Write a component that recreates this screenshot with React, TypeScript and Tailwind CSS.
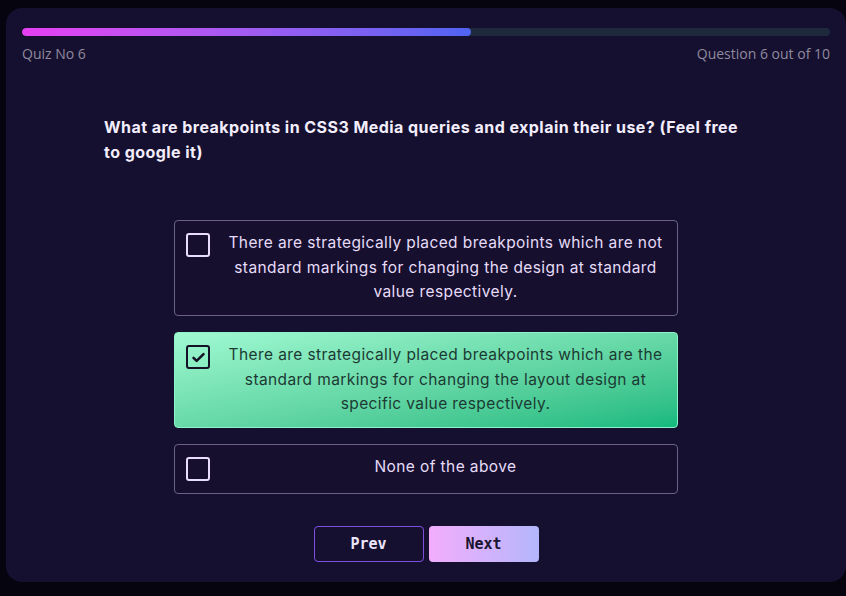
import React, { useState } from "react";

const options = [
  "There are strategically placed breakpoints which are not standard markings for changing the design at standard value respectively.",
  "There are strategically placed breakpoints which are the standard markings for changing the layout design at specific value respectively.",
  "None of the above",
];

function Check({ checked }: { checked: boolean }) {
  return (
    <div
      className={
        "w-6 h-6 shrink-0 mt-[2px] mb-[1.5px] rounded-[3px] flex items-center justify-center " +
        (checked ? "border-[2.5px] border-[#141026]" : "border-2 border-[#e8ddfb]")
      }
    >
      {checked && (
        <svg width="15" height="15" viewBox="0 0 24 24" fill="none">
          <path d="M4 12.5l5 5L20 6.5" stroke="#141026" strokeWidth="4" strokeLinecap="round" strokeLinejoin="round" />
        </svg>
      )}
    </div>
  );
}

export default function App() {
  const [sel, setSel] = useState(1);
  return (
    <div className="w-[846px] h-[596px] bg-[#05040f] pt-2 pl-[6px] overflow-hidden" style={{ fontFamily: "Inter, 'Noto Sans', sans-serif" }}>
      <div className="w-[840px] h-[574px] bg-[#161030] rounded-2xl px-4 pt-5 flex flex-col">
        <div className="h-2 w-full rounded-full bg-[#1e293b] overflow-hidden">
          <div className="h-full w-[449px] rounded-full bg-gradient-to-r from-[#e63ef2] to-[#4f63f2]" />
        </div>
        <div className="flex justify-between mt-[7.5px] text-[14px] leading-5 text-[#8f8a9e]" style={{ fontFamily: "'Open Sans', sans-serif" }}>
          <span>Quiz No 6</span>
          <span>Question 6 out of 10</span>
        </div>
        <div className="w-[644px] mx-auto mt-[51.5px] text-[16px] leading-[25px] font-bold tracking-[0.45px] text-[#f3eefc]">
          What are breakpoints in CSS3 Media queries and explain their use? (Feel free to google it)
        </div>
        <div className="w-[504px] mx-auto mt-[55px] flex flex-col gap-4">
          {options.map((o, i) => {
            const active = sel === i;
            return (
              <div
                key={i}
                onClick={() => setSel(i)}
                className={
                  "flex items-start gap-3 rounded-[4px] border pl-[11px] pr-2 pt-[10px] pb-[10.5px] cursor-pointer " +
                  (active
                    ? "border-[#8ef3c8] bg-gradient-to-br from-[#9ff9d2] to-[#10b97f] text-[#1c3a33]"
                    : "border-[#6b6387] bg-[#160f2e] text-[#e6dcf8]")
                }
              >
                <Check checked={active} />
                <div className="flex-1 text-center text-[15.5px] leading-[24.5px] tracking-[0.4px]">{o}</div>
              </div>
            );
          })}
        </div>
        <div className="flex justify-center gap-[5px] mt-8" style={{ fontFamily: "'DejaVu Sans Mono', monospace" }}>
          <button className="w-[110px] h-9 rounded-[4px] border-[1.5px] border-[#7d4fe0] text-[#ece4fb] font-bold text-[15px]">Prev</button>
          <button className="w-[110px] h-9 rounded-[4px] bg-gradient-to-r from-[#f2adfc] to-[#b3b6fc] text-[#1a1330] font-bold text-[15px]">Next</button>
        </div>
      </div>
    </div>
  );
}
